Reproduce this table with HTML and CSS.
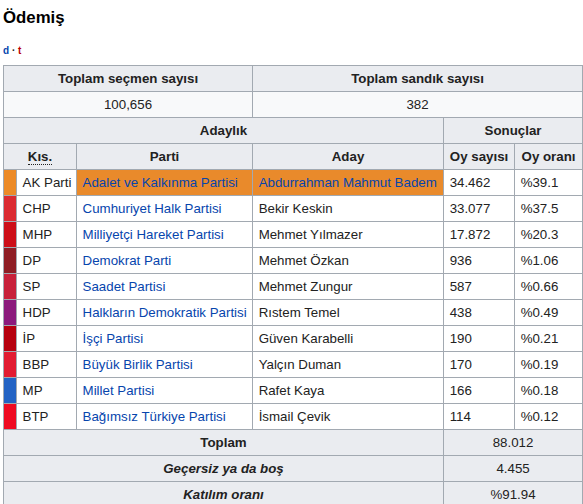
FILE: index.html
```html
<!DOCTYPE html>
<html lang="tr">
<head>
<meta charset="utf-8">
<title>Ödemiş</title>
<link rel="stylesheet" href="styles.css">
</head>
<body>
<div class="page">
  <h3 class="title">Ödemiş</h3>
  <div class="navbar"><a class="nav-d" href="#">d</a> · <a class="nav-t" href="#">t</a></div>
  <table class="wikitable">
    <colgroup>
      <col class="c-strip">
      <col class="c-abbr">
      <col class="c-party">
      <col class="c-cand">
      <col class="c-votes">
      <col class="c-pct">
    </colgroup>
    <tr>
      <th colspan="3">Toplam seçmen sayısı</th>
      <th colspan="3">Toplam sandık sayısı</th>
    </tr>
    <tr class="stats">
      <td colspan="3" class="center">100,656</td>
      <td colspan="3" class="center">382</td>
    </tr>
    <tr>
      <th colspan="4">Adaylık</th>
      <th colspan="2">Sonuçlar</th>
    </tr>
    <tr>
      <th colspan="2"><abbr title="Kısaltma">Kıs.</abbr></th>
      <th>Parti</th>
      <th>Aday</th>
      <th>Oy sayısı</th>
      <th>Oy oranı</th>
    </tr>
    <tr class="winner">
      <td class="strip akp"></td>
      <td>AK Parti</td>
      <td class="hl"><a href="#">Adalet ve Kalkınma Partisi</a></td>
      <td class="hl"><a href="#">Abdurrahman Mahmut Badem</a></td>
      <td>34.462</td>
      <td>%39.1</td>
    </tr>
    <tr>
      <td class="strip chp"></td>
      <td>CHP</td>
      <td><a href="#">Cumhuriyet Halk Partisi</a></td>
      <td>Bekir Keskin</td>
      <td>33.077</td>
      <td>%37.5</td>
    </tr>
    <tr>
      <td class="strip mhp"></td>
      <td>MHP</td>
      <td><a href="#">Milliyetçi Hareket Partisi</a></td>
      <td>Mehmet Yılmazer</td>
      <td>17.872</td>
      <td>%20.3</td>
    </tr>
    <tr>
      <td class="strip dp"></td>
      <td>DP</td>
      <td><a href="#">Demokrat Parti</a></td>
      <td>Mehmet Özkan</td>
      <td>936</td>
      <td>%1.06</td>
    </tr>
    <tr>
      <td class="strip sp"></td>
      <td>SP</td>
      <td><a href="#">Saadet Partisi</a></td>
      <td>Mehmet Zungur</td>
      <td>587</td>
      <td>%0.66</td>
    </tr>
    <tr>
      <td class="strip hdp"></td>
      <td>HDP</td>
      <td><a href="#">Halkların Demokratik Partisi</a></td>
      <td>Rıstem Temel</td>
      <td>438</td>
      <td>%0.49</td>
    </tr>
    <tr>
      <td class="strip ip"></td>
      <td>İP</td>
      <td><a href="#">İşçi Partisi</a></td>
      <td>Güven Karabelli</td>
      <td>190</td>
      <td>%0.21</td>
    </tr>
    <tr>
      <td class="strip bbp"></td>
      <td>BBP</td>
      <td><a href="#">Büyük Birlik Partisi</a></td>
      <td>Yalçın Duman</td>
      <td>170</td>
      <td>%0.19</td>
    </tr>
    <tr>
      <td class="strip mp"></td>
      <td>MP</td>
      <td><a href="#">Millet Partisi</a></td>
      <td>Rafet Kaya</td>
      <td>166</td>
      <td>%0.18</td>
    </tr>
    <tr>
      <td class="strip btp"></td>
      <td>BTP</td>
      <td><a href="#">Bağımsız Türkiye Partisi</a></td>
      <td>İsmail Çevik</td>
      <td>114</td>
      <td>%0.12</td>
    </tr>
    <tr class="total">
      <th colspan="4">Toplam</th>
      <td colspan="2">88.012</td>
    </tr>
    <tr class="total">
      <th colspan="4"><i>Geçersiz ya da boş</i></th>
      <td colspan="2">4.455</td>
    </tr>
    <tr class="total">
      <th colspan="4"><i>Katılım oranı</i></th>
      <td colspan="2">%91.94</td>
    </tr>
  </table>
</div>
</body>
</html>
```

FILE: styles.css
```css
html, body {
  margin: 0;
  padding: 0;
  background: #fff;
}

body {
  font-family: "Liberation Sans", Arial, sans-serif;
  color: #222;
}

.page {
  padding: 8px 0 0 3px;
}

.title {
  margin: 0;
  font-size: 16.8px;
  line-height: 20px;
  font-weight: bold;
  color: #000;
}

.navbar {
  margin-top: 16px;
  font-size: 10px;
  line-height: 14px;
  font-weight: bold;
  color: #222;
}

.navbar a {
  text-decoration: none;
}

.nav-d {
  color: #0645ad;
}

.nav-t {
  color: #ba0000;
}

.wikitable {
  margin-top: 7px;
  border-collapse: collapse;
  table-layout: fixed;
  width: 579px;
  font-size: 13.3px;
  background: #f8f9fa;
  border: 1px solid #a2a9b1;
}

.c-strip { width: 13px; }
.c-abbr { width: 60px; }
.c-party { width: 176px; }
.c-cand { width: 191px; }
.c-votes { width: 71px; }
.c-pct { width: 68px; }

.wikitable th,
.wikitable td {
  border: 1px solid #a2a9b1;
  padding: 3px 5.6px;
  line-height: 19px;
  white-space: nowrap;
  overflow: hidden;
}

.wikitable th {
  background: #eaecf0;
  text-align: center;
  font-weight: bold;
  color: #222;
}

.wikitable td {
  background: #fff;
  text-align: left;
}

.wikitable .stats td {
  background: #f8f9fa;
}

.wikitable td.center {
  text-align: center;
}

.wikitable a {
  color: #0645ad;
  text-decoration: none;
}

abbr {
  text-decoration: none;
  border-bottom: 1px dotted #222;
}

.wikitable .total td {
  background: #eaecf0;
  text-align: center;
}

.wikitable td.strip {
  padding: 0;
}

.wikitable td.hl { background: #e98a2b; }

.akp { background: #ec8a27 !important; }
.chp { background: #db2a31 !important; }
.mhp { background: #cd0e18 !important; }
.dp { background: #8f1d24 !important; }
.sp { background: #c8203a !important; }
.hdp { background: #8c1a7d !important; }
.ip { background: #b6000f !important; }
.bbp { background: #e21b31 !important; }
.mp { background: #2363c4 !important; }
.btp { background: #ef0b22 !important; }
```
